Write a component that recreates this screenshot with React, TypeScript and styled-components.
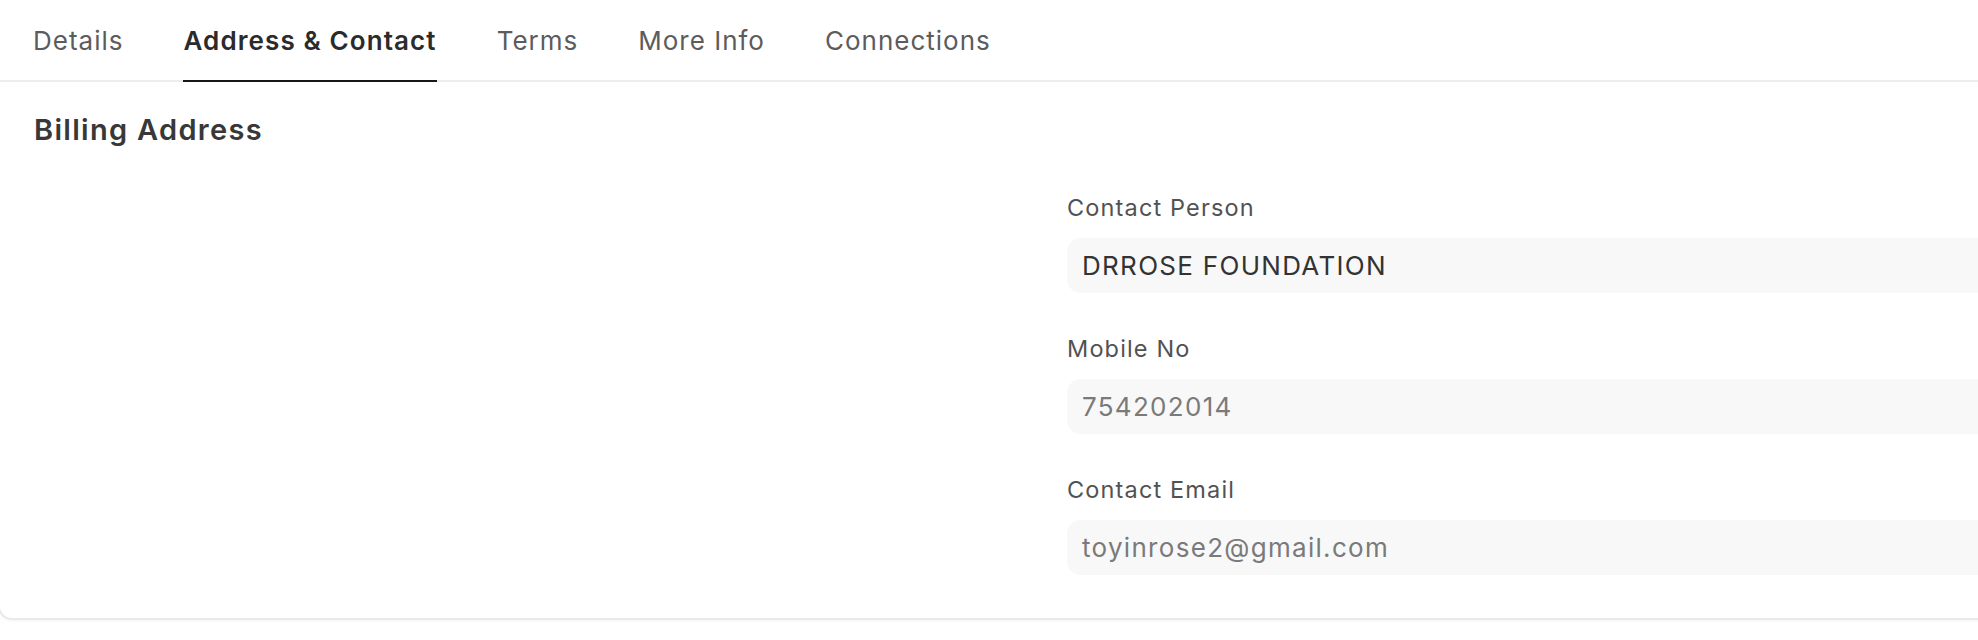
import styled, { createGlobalStyle, css } from "styled-components";

const GlobalStyle = createGlobalStyle`
  * {
    box-sizing: border-box;
    margin: 0;
    padding: 0;
  }

  html, body {
    width: 1978px;
    height: 640px;
    overflow: hidden;
    background: #ffffff;
    font-family: Inter, "Noto Sans", sans-serif;
    -webkit-font-smoothing: antialiased;
  }
`;

const tabs = ["Details", "Address & Contact", "Terms", "More Info", "Connections"];

const fields = [
  { label: "Contact Person", value: "DRROSE FOUNDATION", readOnly: false },
  { label: "Mobile No", value: "754202014", readOnly: true },
  { label: "Contact Email", value: "toyinrose2@gmail.com", readOnly: true },
];

export default function App() {
  const active = 1;

  return (
    <>
      <GlobalStyle />
      <Card>
        <TabBar>
          {tabs.map((t, i) => (
            <Tab key={t} active={i === active}>
              {t}
            </Tab>
          ))}
        </TabBar>
        <Section>
          <SectionHead>Billing Address</SectionHead>
          <Columns>
            <Column />
            <Column>
              {fields.map((f) => (
                <Field key={f.label}>
                  <Label>{f.label}</Label>
                  <Control muted={f.readOnly}>{f.value}</Control>
                </Field>
              ))}
            </Column>
          </Columns>
        </Section>
      </Card>
    </>
  );
}

const Card = styled.div`
  width: 2070px;
  margin-left: -2px;
  background: #ffffff;
  border: 2px solid #e9e9e9;
  border-top: none;
  border-radius: 0 0 14px 14px;
  box-shadow: 0 2px 1px rgba(0, 0, 0, 0.025);
`;

const TabBar = styled.div`
  display: flex;
  gap: 60px;
  padding-left: 33px;
  border-bottom: 2px solid #ededed;
`;

const Tab = styled.div<{ active: boolean }>`
  height: 82px;
  display: flex;
  align-items: center;
  font-size: 26px;
  letter-spacing: 1px;
  color: #5c5c5c;
  border-bottom: 2px solid transparent;
  margin-bottom: -2px;
  white-space: nowrap;
  ${(p) =>
    p.active &&
    css`
      color: #2b2b2b;
      font-weight: 600;
      letter-spacing: 1.1px;
      border-bottom-color: #171717;
    `}
`;

const Section = styled.div`
  padding: 31px 33px 43px 33px;
`;

const SectionHead = styled.h2`
  font-size: 29px;
  line-height: 34px;
  font-weight: 600;
  letter-spacing: 1.3px;
  color: #383838;
  margin-left: 1px;
`;

const Columns = styled.div`
  display: grid;
  grid-template-columns: 968px 968px;
  column-gap: 66px;
  margin-top: 48px;
`;

const Column = styled.div`
  display: flex;
  flex-direction: column;
  gap: 43px;
`;

const Field = styled.div`
  display: flex;
  flex-direction: column;
`;

const Label = styled.label`
  font-size: 23.5px;
  line-height: 26px;
  letter-spacing: 1.15px;
  color: #525252;
  margin-bottom: 17px;
`;

const Control = styled.div<{ muted: boolean }>`
  height: 55px;
  display: flex;
  align-items: center;
  padding: 0 15px;
  border-radius: 14px;
  background: #f8f8f8;
  font-size: 26px;
  letter-spacing: 1.3px;
  color: ${(p) => (p.muted ? "#7a7a7a" : "#333333")};
`;
